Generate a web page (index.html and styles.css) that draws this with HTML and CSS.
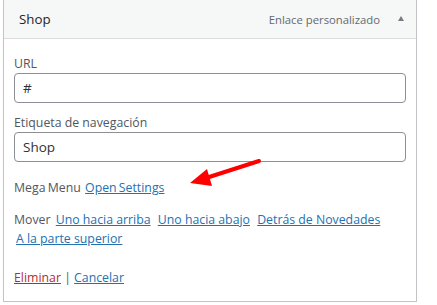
FILE: index.html
```html
<!DOCTYPE html>
<html>
<head>
<meta charset="UTF-8">
  <meta name="viewport" content="width=device-width, initial-scale=1.0">
  <title>Shop</title>
  <link rel="stylesheet" href="styles.css">
</head>
<body>
<div class="menu-item">
  <div class="item-bar">
    <span class="item-title">Shop</span>
    <span class="item-type">Enlace personalizado</span>
    <span class="item-toggle"><i class="arrow-up"></i></span>
  </div>
  <div class="item-settings">
    <label class="field-label">URL</label>
    <div class="field-input">#</div>
    <label class="field-label label-gap">Etiqueta de navegación</label>
    <div class="field-input">Shop</div>

    <p class="mega-row">Mega Menu&nbsp; <a href="#">Open Settings</a></p>

    <p class="move-row">Mover <a href="#">Uno hacia arriba</a> <a href="#">Uno hacia abajo</a> <a href="#">Detrás de Novedades</a> <a href="#">A la parte superior</a></p>

    <p class="actions-row"><a href="#" class="delete">Eliminar</a> | <a href="#">Cancelar</a></p>
  </div>

  <!-- flecha roja -->
  <svg class="red-arrow" width="80" height="34" viewBox="0 0 80 34">
    <line x1="77" y1="5" x2="24" y2="22" stroke="#f00" stroke-width="4" stroke-linecap="round"/>
    <polygon points="8,27 25,13 30,30" fill="#f00"/>
  </svg>
</div>
</body>
</html>
```

FILE: styles.css
```css
/* estilos */
body {
  font-family: "Open Sans", "Noto Sans", Arial, sans-serif;
  margin: 0;
  padding: 0;
  background: #fff;
  color: #50575e;
}

.menu-item {
  position: relative;
  width: 412px;
  margin-left: 3px;
  border: 1px solid #c3c4c7;
  border-top: none;
  box-shadow: 0 1px 1px rgba(0, 0, 0, 0.04);
}

.item-bar {
  display: flex;
  align-items: center;
  height: 38px;
  padding-left: 15px;
  background: #f6f7f7;
  border-bottom: 1px solid #dcdcde;
}

.item-title {
  flex: 1;
  font-size: 13.3px;
  color: #1d2327;
}

.item-type {
  font-size: 11.3px;
  color: #646970;
}

.item-toggle {
  width: 36px;
  display: flex;
  justify-content: flex-end;
  padding-right: 12px;
  box-sizing: border-box;
}

.arrow-up {
  display: block;
  width: 0;
  height: 0;
  border-left: 3.5px solid transparent;
  border-right: 3.5px solid transparent;
  border-bottom: 5px solid #787c82;
  margin-top: -2px;
}

.item-settings {
  padding: 16px 10px 14px;
  font-size: 12.3px;
  line-height: 19px;
}

.field-label {
  display: block;
  line-height: 18px;
}

.label-gap {
  margin-top: 11px;
}

.field-input {
  height: 28px;
  border: 1px solid #8c8f94;
  border-radius: 4px;
  padding: 0 8px;
  font-size: 13.5px;
  line-height: 28px;
  color: #2c3338;
}

.mega-row {
  margin: 16px 0 0;
  word-spacing: -1px;
}

.move-row {
  margin: 13px 0 0;
}

.move-row a {
  margin: 0 2px;
  white-space: nowrap;
}

.actions-row {
  margin: 20px 0 0;
}

a {
  color: #2271b1;
  text-decoration: underline;
}

a.delete {
  color: #b32d2e;
}

.red-arrow {
  position: absolute;
  left: 178px;
  top: 156px;
}
```
